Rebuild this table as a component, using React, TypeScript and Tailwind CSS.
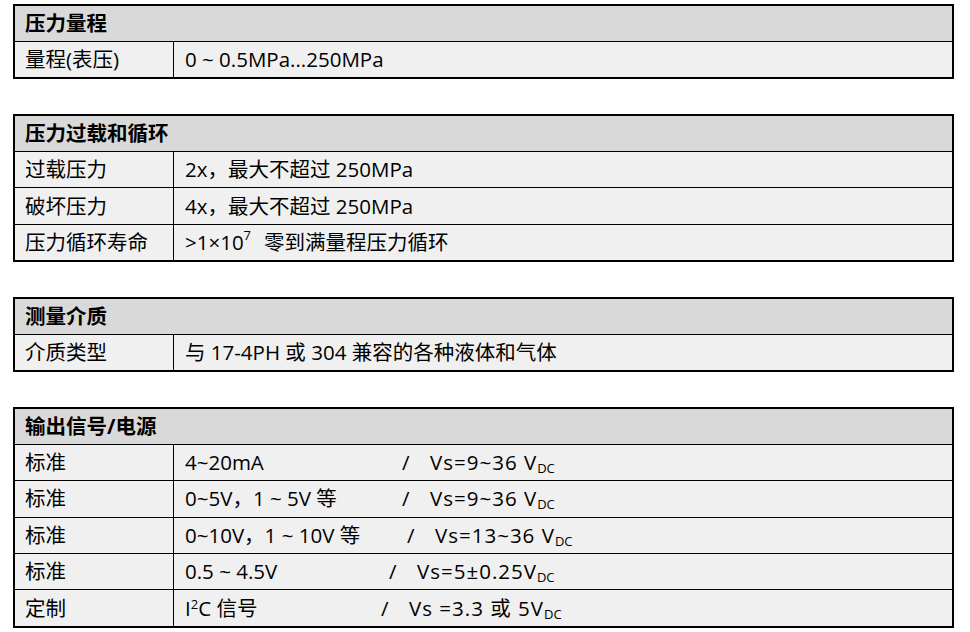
import type { ReactNode } from 'react';

const font = { fontFamily: '"Open Sans", "Noto Sans CJK SC", sans-serif' };

function Section({ title, children }: { title: string; children: ReactNode }) {
  return (
    <div className="ml-[13px] w-[941px] border-2 border-black bg-[#f0f0f0]">
      <div className="flex h-[35px] items-center bg-[#d9d9d9] pl-[10px] text-[20.5px] font-bold text-black">
        {title}
      </div>
      {children}
    </div>
  );
}

function Row({ label, children }: { label: string; children: ReactNode }) {
  return (
    <div className="flex h-[36.4px] border-t border-black text-[20.5px] text-black">
      <div className="flex w-[158px] items-center pl-[10px]">{label}</div>
      <div className="flex flex-1 items-center whitespace-pre border-l border-black pl-[11px]">{children}</div>
    </div>
  );
}

// output signal, then a slash placed at a fixed x, then the supply voltage
function Signal({ out, w, vs }: { out: ReactNode; w: number; vs: ReactNode }) {
  return (
    <>
      <span className="inline-block shrink-0" style={{ width: w }}>{out}</span>
      <span className="inline-block w-[28px]">/</span>
      <span className="tracking-[1px]">{vs}</span>
    </>
  );
}

const Dc = () => <sub className="relative top-[3px] align-baseline text-[13px] tracking-normal">DC</sub>;

export default function App() {
  const signals = [
    { label: '标准', out: '4~20mA', w: 217, vs: <>Vs=9~36 V<Dc /></> },
    { label: '标准', out: '0~5V，1 ~ 5V 等', w: 217, vs: <>Vs=9~36 V<Dc /></> },
    { label: '标准', out: '0~10V，1 ~ 10V 等', w: 222, vs: <>Vs=13~36 V<Dc /></> },
    { label: '标准', out: '0.5 ~ 4.5V', w: 204, vs: <>Vs=5±0.25V<Dc /></> },
    {
      label: '定制',
      out: <>I<sup className="relative top-[-7px] align-baseline text-[13px]">2</sup>C 信号</>,
      w: 196,
      vs: <>Vs =3.3 或 5V<Dc /></>,
    },
  ];

  return (
    <div className="flex h-[632px] w-[970px] flex-col gap-[34.6px] bg-white pt-[4px]" style={font}>
      <Section title="压力量程">
        <Row label="量程(表压)">0 ~ 0.5MPa...250MPa</Row>
      </Section>

      <Section title="压力过载和循环">
        <Row label="过载压力">2x，最大不超过 250MPa</Row>
        <Row label="破坏压力">4x，最大不超过 250MPa</Row>
        <Row label="压力循环寿命">
          &gt;1×10<sup className="relative top-[-7px] align-baseline text-[13px]">7</sup>
          <span className="inline-block w-[13px]" />零到满量程压力循环
        </Row>
      </Section>

      <Section title="测量介质">
        <Row label="介质类型">与 17-4PH 或 304 兼容的各种液体和气体</Row>
      </Section>

      <Section title="输出信号/电源">
        {signals.map((s, i) => (
          <Row key={i} label={s.label}>
            <Signal out={s.out} w={s.w} vs={s.vs} />
          </Row>
        ))}
      </Section>
    </div>
  );
}
